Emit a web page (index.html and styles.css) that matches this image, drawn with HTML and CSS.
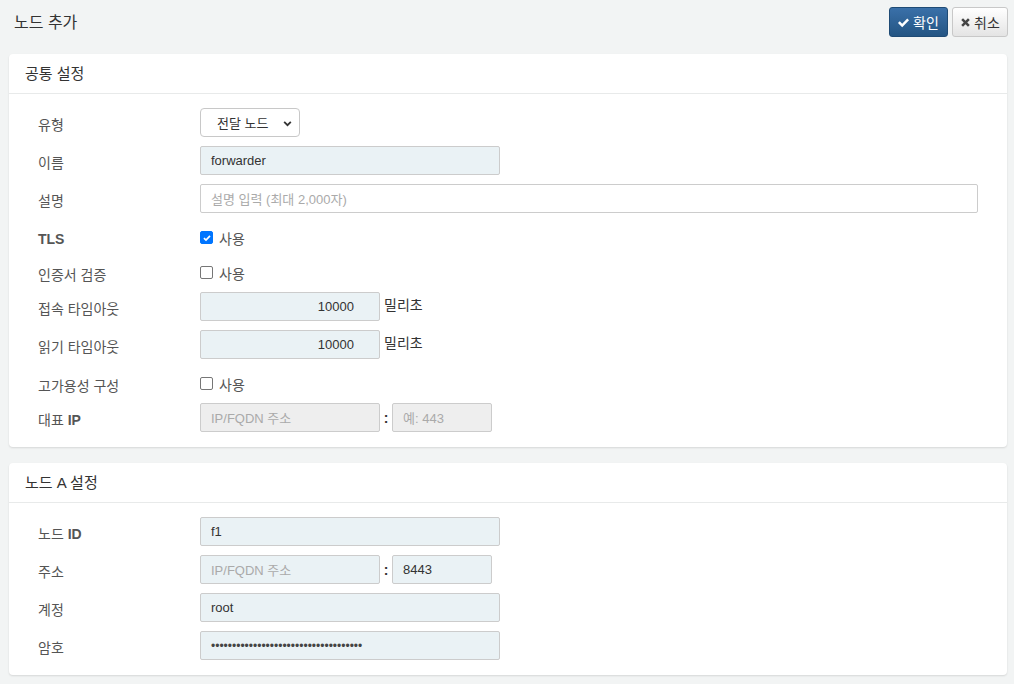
FILE: index.html
```html
<!DOCTYPE html>
<html lang="ko">
<head>
<meta charset="utf-8">
<title>노드 추가</title>
<link rel="stylesheet" href="styles.css">
</head>
<body>
<div class="page">
  <div class="topbar">
    <h1 class="title">노드 추가</h1>
    <div class="actions">
      <button class="btn btn-primary"><svg class="ico" viewBox="0 0 16 16" width="13" height="13"><path d="M1.2 8.6 L3.4 6.4 L6.4 9.4 L12.6 3.1 L14.8 5.3 L6.4 13.7 Z" fill="#fff"/></svg>확인</button>
      <button class="btn btn-default"><svg class="ico" viewBox="0 0 16 16" width="11" height="11"><path d="M1.8 4.4 L4.4 1.8 L8 5.4 L11.6 1.8 L14.2 4.4 L10.6 8 L14.2 11.6 L11.6 14.2 L8 10.6 L4.4 14.2 L1.8 11.6 L5.4 8 Z" fill="#444"/></svg>취소</button>
    </div>
  </div>

  <section class="card">
    <div class="card-head">공통 설정</div>
    <div class="card-body">
      <div class="row">
        <div class="lbl">유형</div>
        <div class="select">전달 노드<svg class="chev" viewBox="0 0 10 10" width="9" height="9"><path d="M1.3 3.2 L5 6.9 L8.7 3.2" fill="none" stroke="#333" stroke-width="2"/></svg></div>
      </div>
      <div class="row">
        <div class="lbl">이름</div>
        <div class="inp w300">forwarder</div>
      </div>
      <div class="row">
        <div class="lbl">설명</div>
        <div class="inp wfull white ph">설명 입력 (최대 2,000자)</div>
      </div>
      <div class="row chk-row">
        <div class="lbl"><span class="lat">TLS</span></div>
        <label class="chk"><span class="box checked"><svg viewBox="0 0 12 12" width="10" height="10"><path d="M2.3 6.2 L4.8 8.6 L9.6 3.4" fill="none" stroke="#fff" stroke-width="2"/></svg></span>사용</label>
      </div>
      <div class="row chk-row">
        <div class="lbl">인증서 검증</div>
        <label class="chk"><span class="box"></span>사용</label>
      </div>
      <div class="row">
        <div class="lbl">접속 타임아웃</div>
        <div class="inp w180 num">10000</div>
        <span class="unit">밀리초</span>
      </div>
      <div class="row">
        <div class="lbl">읽기 타임아웃</div>
        <div class="inp w180 num">10000</div>
        <span class="unit">밀리초</span>
      </div>
      <div class="row chk-row">
        <div class="lbl">고가용성 구성</div>
        <label class="chk"><span class="box"></span>사용</label>
      </div>
      <div class="row last">
        <div class="lbl">대표 <span class="lat">IP</span></div>
        <div class="inp w180 disabled ph">IP/FQDN 주소</div>
        <span class="colon">:</span>
        <div class="inp w100 disabled ph">예: 443</div>
      </div>
    </div>
  </section>

  <section class="card">
    <div class="card-head">노드 A 설정</div>
    <div class="card-body">
      <div class="row">
        <div class="lbl">노드 <span class="lat">ID</span></div>
        <div class="inp w300">f1</div>
      </div>
      <div class="row">
        <div class="lbl">주소</div>
        <div class="inp w180 ph">IP/FQDN 주소</div>
        <span class="colon">:</span>
        <div class="inp w100">8443</div>
      </div>
      <div class="row">
        <div class="lbl">계정</div>
        <div class="inp w300">root</div>
      </div>
      <div class="row last">
        <div class="lbl">암호</div>
        <div class="inp w300 pw">••••••••••••••••••••••••••••••••••••</div>
      </div>
    </div>
  </section>
</div>
</body>
</html>
```

FILE: styles.css
```css
* { box-sizing: border-box; }
html, body { margin: 0; padding: 0; }
body {
  background: #f2f4f4;
  font-family: "Liberation Sans", "Noto Sans CJK KR", sans-serif;
  color: #333;
  font-size: 14px;
}
.page {
  width: 1014px;
  height: 684px;
  overflow: hidden;
  padding: 7px 7px 0 9px;
}
.topbar {
  display: flex;
  justify-content: space-between;
  align-items: flex-start;
  height: 47px;
}
.title {
  margin: 4px 0 0 5px;
  font-size: 16px;
  font-weight: 400;
  color: #333;
  line-height: 24px;
}
.actions { display: flex; gap: 4px; margin-right: -1px; }
.btn {
  height: 30px;
  border-radius: 3px;
  font-family: inherit;
  font-size: 14px;
  display: flex;
  align-items: center;
  gap: 3px;
  padding: 0 7px 0 7px;
  cursor: pointer;
}
.btn-primary {
  width: 59px;
  background: linear-gradient(#3a70a9, #245583);
  border: 1px solid #1f4b75;
  color: #fff;
}
.btn-default {
  width: 56px;
  background: linear-gradient(#ffffff, #e4e4e4);
  border: 1px solid #c8c8c8;
  color: #333;
  gap: 3px;
}
.ico { flex: none; }

.card {
  background: #fff;
  border-radius: 4px;
  box-shadow: 0 1px 2px rgba(0,0,0,0.12);
  margin-bottom: 16px;
}
.card-head {
  height: 40px;
  border-bottom: 1px solid #e8eaea;
  padding: 9px 0 0 16px;
  font-size: 15px;
  color: #333;
  line-height: 22px;
}
.card-body {
  padding: 14px 0 15px 0;
}
.row {
  display: flex;
  align-items: center;
  height: 29px;
  margin-bottom: 9px;
}
.row.last { margin-bottom: 0; }
.chk-row {
  height: 26px;
  padding-top: 5px;
}
.lbl {
  width: 191px;
  flex: none;
  padding-left: 29px;
  padding-top: 3px;
  color: #555;
  font-size: 14px;
}
.lat { font-weight: 700; }
.select {
  width: 100px;
  height: 29px;
  border: 1px solid #c8c8c8;
  border-radius: 4px;
  background: #fff;
  display: flex;
  align-items: center;
  padding-left: 16px;
  font-size: 13px;
  color: #333;
  position: relative;
}
.chev { position: absolute; right: 7px; top: 10px; }
.inp {
  height: 29px;
  border: 1px solid #ccc;
  border-radius: 2px;
  background: #eaf2f5;
  display: flex;
  align-items: center;
  padding: 0 10px;
  font-size: 13px;
  color: #333;
  white-space: nowrap;
  overflow: hidden;
}
.w300 { width: 300px; }
.w180 { width: 180px; }
.w100 { width: 100px; }
.wfull { width: 778px; }
.white { background: #fff; }
.disabled { background: #eeeeee; }
.ph { color: #aaa; }
.num { justify-content: flex-end; padding-right: 25px; }
.pw { font-size: 12px; letter-spacing: 0; color: #444; }
.unit { margin-left: 4px; font-size: 14px; color: #333; padding-bottom: 6px; }
.colon { width: 12px; text-align: center; font-weight: 700; color: #333; font-size: 14px; }
.chk {
  display: flex;
  align-items: center;
  gap: 6px;
  color: #555;
  font-size: 14px;
}
.box {
  width: 13px;
  height: 13px;
  border: 1px solid #767676;
  border-radius: 2px;
  background: #fff;
  display: flex;
  align-items: center;
  justify-content: center;
}
.box.checked { background: #0075ff; border-color: #0075ff; }
```
